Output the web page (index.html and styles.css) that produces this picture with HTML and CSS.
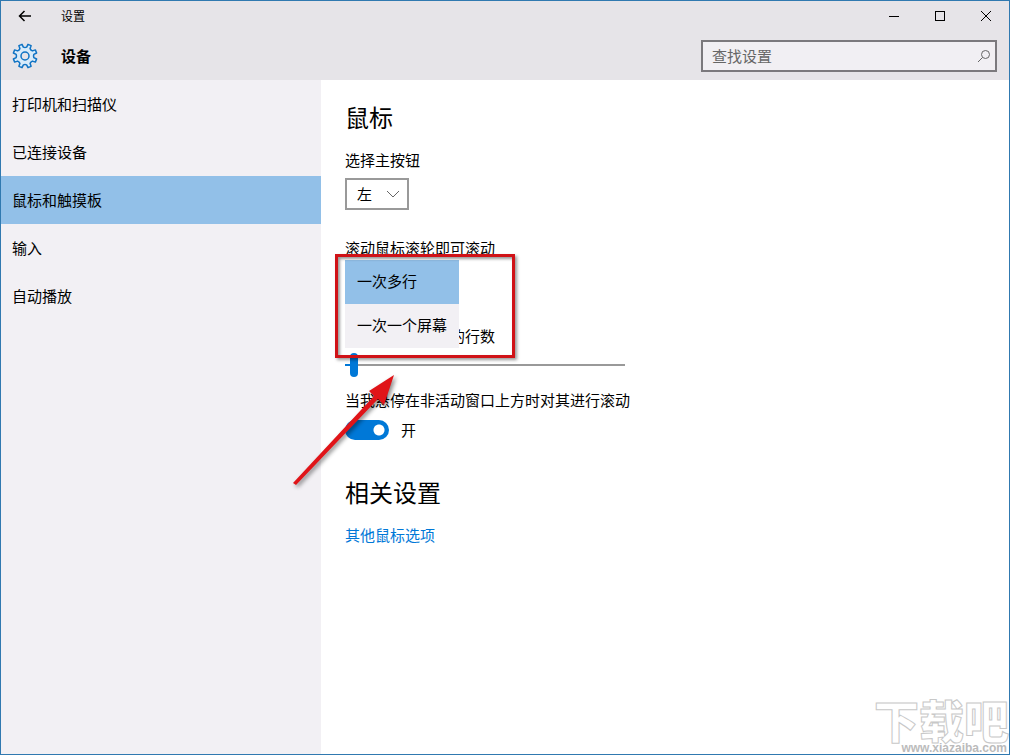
FILE: index.html
```html
<!DOCTYPE html>
<html lang="zh-CN">
<head>
<meta charset="utf-8">
<title>设置</title>
<link rel="stylesheet" href="styles.css">
</head>
<body>
<div class="window">
  <header class="top">
    <div class="titlebar">
      <button class="back" type="button" aria-label="返回">
        <svg width="14" height="12" viewBox="0 0 14 12"><path d="M13 6H1.5M6.5 1L1.5 6l5 5"/></svg>
      </button>
      <span class="app-name">设置</span>
      <div class="caption">
        <button type="button" aria-label="最小化"><svg width="12" height="12" viewBox="0 0 12 12" shape-rendering="crispEdges"><path d="M1 6.500h10"/></svg></button>
        <button type="button" aria-label="最大化"><svg width="12" height="12" viewBox="0 0 12 12" shape-rendering="crispEdges"><path d="M1.500 1.500h9v9h-9z"/></svg></button>
        <button type="button" aria-label="关闭"><svg width="12" height="12" viewBox="0 0 12 12"><path d="M1 1l10 10M11 1L1 11"/></svg></button>
      </div>
    </div>
    <div class="heading">
      <svg class="gear" width="26" height="26" viewBox="-13 -13 26 26">
        <path d="M8.850 1.640L11.620 3L10.340 6.090L7.420 5.100Q5.800 5.800 5.100 7.420L6.090 10.340L3 11.620L1.640 8.850Q0 8.200 -1.640 8.850L-3 11.620L-6.090 10.340L-5.100 7.420Q-5.800 5.800 -7.420 5.100L-10.340 6.090L-11.620 3L-8.850 1.640Q-8.200 0 -8.850 -1.640L-11.620 -3L-10.340 -6.090L-7.420 -5.100Q-5.800 -5.800 -5.100 -7.420L-6.090 -10.340L-3 -11.620L-1.640 -8.850Q0 -8.200 1.640 -8.850L3 -11.620L6.090 -10.340L5.100 -7.420Q5.800 -5.800 7.420 -5.100L10.340 -6.090L11.620 -3L8.850 -1.640Q8.200 0 8.850 1.640Z"/>
        <circle r="4"/>
      </svg>
      <span class="section">设备</span>
      <label class="search">
        <input type="search" placeholder="查找设置" aria-label="查找设置">
        <svg width="14" height="14" viewBox="0 0 14 14"><circle cx="8.500" cy="5.500" r="4"/><path d="M5.500 8.500L1 13"/></svg>
      </label>
    </div>
  </header>
  <div class="body">
    <nav class="side">
      <a href="#printers">打印机和扫描仪</a>
      <a href="#connected">已连接设备</a>
      <a href="#mouse" class="current" aria-current="page">鼠标和触摸板</a>
      <a href="#typing">输入</a>
      <a href="#autoplay">自动播放</a>
    </nav>
    <main class="content">
      <h1>鼠标</h1>
      <label class="label" for="primary">选择主按钮</label>
      <div class="picker">
        <select id="primary"><option>左</option><option>右</option></select>
        <svg width="14" height="8" viewBox="0 0 14 8"><path d="M1 1l6 6 6-6"/></svg>
      </div>
      <label class="label" for="wheel">滚动鼠标滚轮即可滚动</label>
      <div class="wheel">
        <select id="wheel" size="2"><option selected>一次多行</option><option>一次一个屏幕</option></select>
        <div class="marker"></div>
        <svg class="arrow" width="112" height="122" viewBox="0 0 112 122"><path d="M3 112L84 25L79 20L104 4L94 34L88 28L6 114Z"/></svg>
      </div>
      <label class="label" for="lines">设置每次要滚动的行数</label>
      <input class="slider" id="lines" type="range" min="1" max="100" value="3">
      <label class="label" for="hover">当我悬停在非活动窗口上方时对其进行滚动</label>
      <div class="switch-row"><input class="switch" id="hover" type="checkbox" role="switch" checked><span>开</span></div>
      <h2>相关设置</h2>
      <a class="link" href="#more">其他鼠标选项</a>
    </main>
  </div>
  <div class="watermark"><span class="mark-name">下载吧</span><span class="mark-url">www.xiazaiba.com</span></div>
</div>
</body>
</html>
```
FILE: styles.css
```css
* { box-sizing: border-box; }
body {
  margin: 0;
  font: 15px/20px "Noto Sans CJK SC", sans-serif;
  color: #000;
}
button, input, select { font: inherit; color: inherit; }
svg { fill: none; stroke: #000; }
.window {
  position: relative;
  display: flex;
  flex-direction: column;
  min-height: 100vh;
  overflow: hidden;
  border: 1px solid #3079b0;
  background: #fff;
}
.top { background: #e6e4e8; }
.titlebar { display: flex; align-items: center; height: 30px; }
.back { width: 48px; height: 30px; padding: 0; border: 0; background: none; }
.back svg { display: block; margin: auto; stroke-width: 1.5; }
.app-name { margin-left: 12px; font-size: 12px; }
.caption { display: flex; margin-left: auto; }
.caption button { width: 46px; height: 30px; padding: 0; border: 0; background: none; }
.caption svg { display: block; margin: auto; }
.heading { display: flex; align-items: center; height: 49px; padding: 0 12px 0 11px; }
.gear { stroke: #0f73c4; stroke-width: 1.5; stroke-linejoin: round; }
.gear path { fill: #d8ebfa; }
.gear circle { fill: #e6e4e8; }
.section { margin-left: 23px; font-weight: 700; }
.search {
  display: flex;
  align-items: center;
  width: 296px;
  height: 32px;
  margin-left: auto;
  padding: 0 4px 0 9px;
  border: 2px solid #7b797d;
  background: #f1eff3;
}
.search input { flex: 1; min-width: 0; padding: 0; border: 0; outline: 0; background: none; }
.search input::placeholder { color: #666; opacity: 1; }
.search svg { stroke: #666; }
.body { display: flex; flex: 1; }
.side { width: 320px; background: #f2f0f4; }
.side a {
  display: block;
  padding: 14px 11px;
  color: inherit;
  text-decoration: none;
}
.side .current { background: #92c0e8; }
.content { display: flex; flex: 1; flex-direction: column; align-items: flex-start; padding: 21px 24px; }
h1, h2 { margin: 0 0 17px; font-size: 24px; font-weight: 400; line-height: 32px; }
h2 { margin-top: 36px; }
.picker { position: relative; margin: 8px 0 28px; }
.picker select {
  display: block;
  width: 64px;
  height: 32px;
  padding: 0 10px;
  border: 2px solid #999;
  border-radius: 0;
  background: #fff;
  appearance: none;
}
.picker svg { position: absolute; right: 9px; top: 12px; stroke: #666; pointer-events: none; }
.wheel { position: relative; height: 32px; margin: 8px 0 28px; }
.wheel select {
  position: absolute;
  z-index: 1;
  top: -6px;
  left: 0;
  width: 114px;
  height: 88px;
  padding: 0;
  overflow: hidden;
  border: 0;
  border-radius: 0;
  outline: 0;
  background: #f2f0f4;
  scrollbar-width: none;
}
.wheel option { height: 44px; min-height: 44px; padding: 10px 12px; border-radius: 0; line-height: 20px; color: #000; }
.wheel option:checked { background: linear-gradient(#92c0e8, #92c0e8); color: #000; }
.marker {
  position: absolute;
  z-index: 2;
  top: -12px;
  left: -10px;
  width: 180px;
  height: 104px;
  border: 3px solid #d01217;
  box-shadow: 2px 2px 3px #0006, inset 2px 2px 3px #0006;
  pointer-events: none;
}
.arrow {
  position: absolute;
  z-index: 2;
  top: 105px;
  left: -55px;
  overflow: visible;
  fill: #e01418;
  stroke: none;
  filter: drop-shadow(2px 2px 2px #0007);
  pointer-events: none;
}
.slider {
  width: 280px;
  height: 24px;
  margin: 7px 0 13px;
  appearance: none;
  background: linear-gradient(90deg, #0078d7 6px, #999 6px) center / 100% 2px no-repeat;
}
.slider::-webkit-slider-thumb {
  width: 8px;
  height: 24px;
  border-radius: 4px;
  background: #0078d7;
  appearance: none;
}
.switch-row { display: flex; align-items: center; gap: 12px; height: 20px; margin-top: 10px; }
.switch {
  width: 44px;
  height: 20px;
  margin: 0;
  border-radius: 10px;
  background: radial-gradient(circle at 34px 10px, #fff 5px, #0078d7 6px);
  appearance: none;
}
.link { color: #0078d7; text-decoration: none; }
.watermark {
  position: absolute;
  right: 0;
  bottom: 0;
  width: 135px;
  color: #fff;
  text-align: right;
  white-space: nowrap;
}
.mark-name {
  display: block;
  font-size: 45px;
  font-weight: 900;
  line-height: 44px;
  -webkit-text-stroke: 1px #c8c8c8;
}
.mark-url {
  display: block;
  padding-right: 2px;
  font: 700 12px/12px "Liberation Sans", sans-serif;
  color: #bbb;
}
```
